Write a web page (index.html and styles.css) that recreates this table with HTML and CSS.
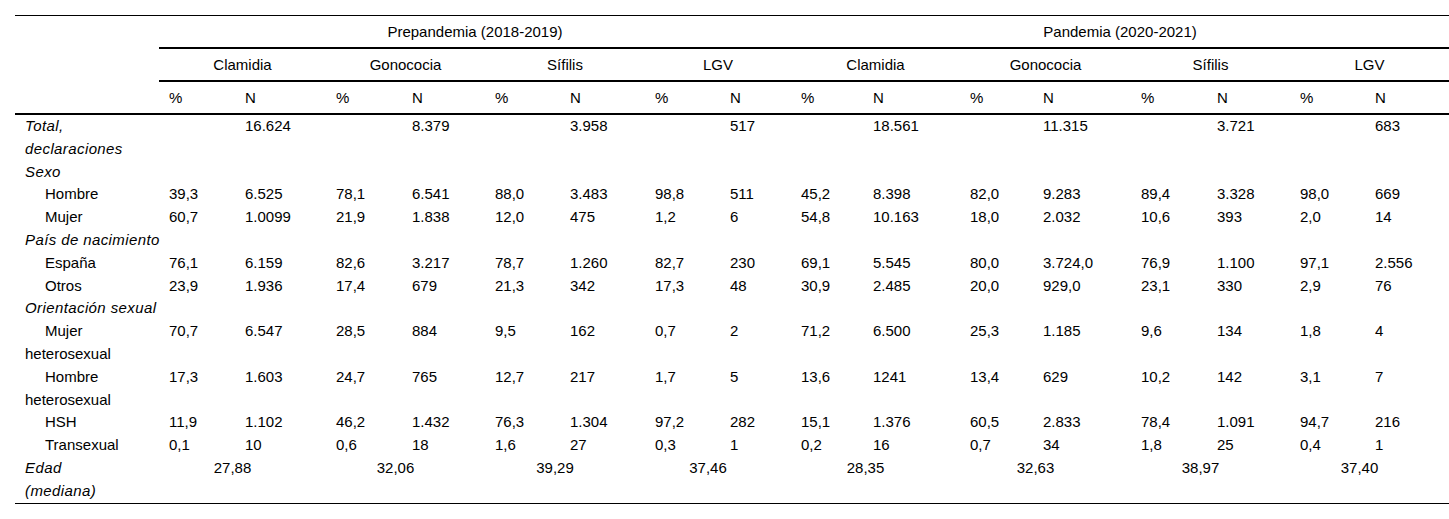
FILE: index.html
```html
<!DOCTYPE html>
<html lang="es">
<head>
<meta charset="utf-8">
<title>Tabla ITS</title>
<link rel="stylesheet" href="styles.css">
</head>
<body>
<table class="data">
  <colgroup>
    <col class="c-label">
    <col class="w76"><col class="w91">
    <col class="w76"><col class="w83">
    <col class="w75"><col class="w85">
    <col class="w75"><col class="w71">
    <col class="w72"><col class="w97">
    <col class="w73"><col class="w98">
    <col class="w76"><col class="w83">
    <col class="w75"><col class="w84">
  </colgroup>
  <thead>
    <tr class="h1">
      <th class="corner" rowspan="3"></th>
      <th class="group" colspan="8">Prepandemia (2018-2019)</th>
      <th class="group" colspan="8">Pandemia (2020-2021)</th>
    </tr>
    <tr class="h2">
      <th class="group" colspan="2">Clamidia</th>
      <th class="group" colspan="2">Gonococia</th>
      <th class="group" colspan="2">Sífilis</th>
      <th class="group" colspan="2">LGV</th>
      <th class="group" colspan="2">Clamidia</th>
      <th class="group" colspan="2">Gonococia</th>
      <th class="group" colspan="2">Sífilis</th>
      <th class="group" colspan="2">LGV</th>
    </tr>
    <tr class="h3">
      <th>%</th><th>N</th><th>%</th><th>N</th><th>%</th><th>N</th><th>%</th><th>N</th>
      <th>%</th><th>N</th><th>%</th><th>N</th><th>%</th><th>N</th><th>%</th><th>N</th>
    </tr>
  </thead>
  <tbody>
    <tr>
      <td class="label sec">Total, declaraciones</td>
      <td></td><td>16.624</td><td></td><td>8.379</td><td></td><td>3.958</td><td></td><td>517</td>
      <td></td><td>18.561</td><td></td><td>11.315</td><td></td><td>3.721</td><td></td><td>683</td>
    </tr>
    <tr><td class="label sec" colspan="17">Sexo</td></tr>
    <tr>
      <td class="label sub">Hombre</td>
      <td>39,3</td><td>6.525</td><td>78,1</td><td>6.541</td><td>88,0</td><td>3.483</td><td>98,8</td><td>511</td>
      <td>45,2</td><td>8.398</td><td>82,0</td><td>9.283</td><td>89,4</td><td>3.328</td><td>98,0</td><td>669</td>
    </tr>
    <tr>
      <td class="label sub">Mujer</td>
      <td>60,7</td><td>1.0099</td><td>21,9</td><td>1.838</td><td>12,0</td><td>475</td><td>1,2</td><td>6</td>
      <td>54,8</td><td>10.163</td><td>18,0</td><td>2.032</td><td>10,6</td><td>393</td><td>2,0</td><td>14</td>
    </tr>
    <tr><td class="label sec" colspan="17">País de nacimiento</td></tr>
    <tr>
      <td class="label sub">España</td>
      <td>76,1</td><td>6.159</td><td>82,6</td><td>3.217</td><td>78,7</td><td>1.260</td><td>82,7</td><td>230</td>
      <td>69,1</td><td>5.545</td><td>80,0</td><td>3.724,0</td><td>76,9</td><td>1.100</td><td>97,1</td><td>2.556</td>
    </tr>
    <tr>
      <td class="label sub">Otros</td>
      <td>23,9</td><td>1.936</td><td>17,4</td><td>679</td><td>21,3</td><td>342</td><td>17,3</td><td>48</td>
      <td>30,9</td><td>2.485</td><td>20,0</td><td>929,0</td><td>23,1</td><td>330</td><td>2,9</td><td>76</td>
    </tr>
    <tr><td class="label sec" colspan="17">Orientación sexual</td></tr>
    <tr>
      <td class="label sub">Mujer heterosexual</td>
      <td>70,7</td><td>6.547</td><td>28,5</td><td>884</td><td>9,5</td><td>162</td><td>0,7</td><td>2</td>
      <td>71,2</td><td>6.500</td><td>25,3</td><td>1.185</td><td>9,6</td><td>134</td><td>1,8</td><td>4</td>
    </tr>
    <tr>
      <td class="label sub">Hombre heterosexual</td>
      <td>17,3</td><td>1.603</td><td>24,7</td><td>765</td><td>12,7</td><td>217</td><td>1,7</td><td>5</td>
      <td>13,6</td><td>1241</td><td>13,4</td><td>629</td><td>10,2</td><td>142</td><td>3,1</td><td>7</td>
    </tr>
    <tr>
      <td class="label sub">HSH</td>
      <td>11,9</td><td>1.102</td><td>46,2</td><td>1.432</td><td>76,3</td><td>1.304</td><td>97,2</td><td>282</td>
      <td>15,1</td><td>1.376</td><td>60,5</td><td>2.833</td><td>78,4</td><td>1.091</td><td>94,7</td><td>216</td>
    </tr>
    <tr>
      <td class="label sub">Transexual</td>
      <td>0,1</td><td>10</td><td>0,6</td><td>18</td><td>1,6</td><td>27</td><td>0,3</td><td>1</td>
      <td>0,2</td><td>16</td><td>0,7</td><td>34</td><td>1,8</td><td>25</td><td>0,4</td><td>1</td>
    </tr>
    <tr class="last">
      <td class="label sec">Edad (mediana)</td>
      <td class="span2" colspan="2">27,88</td>
      <td class="span2" colspan="2">32,06</td>
      <td class="span2" colspan="2">39,29</td>
      <td class="span2" colspan="2">37,46</td>
      <td class="span2" colspan="2">28,35</td>
      <td class="span2" colspan="2">32,63</td>
      <td class="span2" colspan="2">38,97</td>
      <td class="span2" colspan="2">37,40</td>
    </tr>
  </tbody>
</table>
</body>
</html>
```

FILE: styles.css
```css
html, body {
  margin: 0;
  padding: 0;
  background: #fff;
}

body {
  padding: 15px 0 0 15px;
  font-family: "Liberation Sans", Arial, sans-serif;
  font-size: 15px;
  color: #000;
}

.data {
  border-collapse: collapse;
  table-layout: fixed;
  width: 1434px;
}

.c-label { width: 144px; }
.w71 { width: 71px; }
.w72 { width: 72px; }
.w73 { width: 73px; }
.w75 { width: 75px; }
.w76 { width: 76px; }
.w83 { width: 83px; }
.w84 { width: 84px; }
.w85 { width: 85px; }
.w91 { width: 91px; }
.w97 { width: 97px; }
.w98 { width: 98px; }

.data th,
.data td {
  padding: 0 10px;
  text-align: left;
  vertical-align: top;
  font-weight: normal;
  line-height: 22.8px;
  white-space: normal;
}

.data thead th {
  padding-top: 4px;
  padding-bottom: 4px;
  line-height: 23px;
}

.data .h1 th {
  border-top: 1px solid #000;
}

.data .h1 .group,
.data .h2 .group,
.data .h3 th,
.data .corner {
  border-bottom: 2px solid #000;
}

.data .group {
  text-align: center;
}

.data td.label {
  padding-right: 34px;
}

.data .sec {
  font-style: italic;
  letter-spacing: 0.4px;
}

.data .sub {
  text-indent: 20px;
}

.data td.span2 {
  text-align: center;
  padding-right: 30px;
}

.data .last td {
  border-bottom: 1px solid #000;
}
```
